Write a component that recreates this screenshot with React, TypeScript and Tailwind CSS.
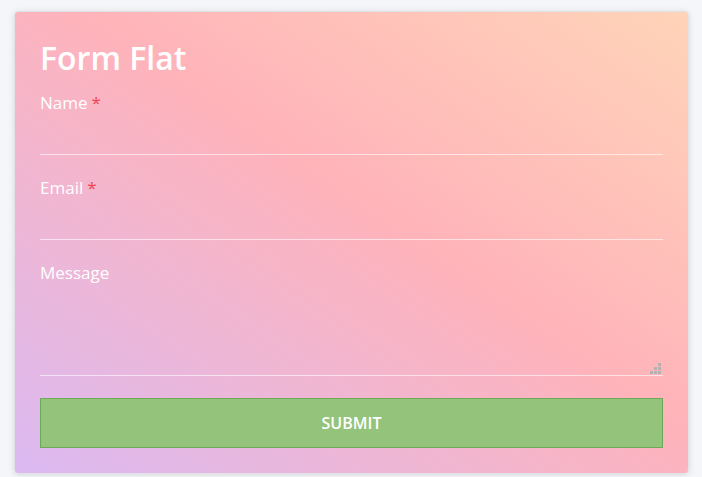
import { useState } from "react";

const font = { fontFamily: "'Open Sans', 'Noto Sans', sans-serif" };

const Field = ({ label, required, children }: { label: string; required?: boolean; children: React.ReactNode }) => (
  <div className="flex flex-col">
    <label className="text-[17px] leading-[24px] text-white">
      {label}
      {required && <span className="text-[#f0444f] ml-1">*</span>}
    </label>
    {children}
  </div>
);

// little stepped grip, like the one in the corner of the message box
const Grip = () => (
  <div className="absolute right-[2px] bottom-[2px] grid grid-cols-3 gap-[1px] pointer-events-none">
    {[0, 0, 1, 0, 1, 1, 1, 1, 1].map((on, i) => (
      <span key={i} className={`w-[3px] h-[3px] ${on ? "bg-[#b5b0b0]" : ""}`} />
    ))}
  </div>
);

const App = () => {
  const [name, setName] = useState("");
  const [email, setEmail] = useState("");
  const [message, setMessage] = useState("");

  return (
    <div className="min-h-screen bg-[#f4f6fa] pt-[11px] pl-[14px]" style={font}>
      <form
        onSubmit={(e) => e.preventDefault()}
        className="w-[675px] rounded-[4px] border border-[#e2e2e6] bg-gradient-to-tr from-[#dcb9f0] from-[2%] via-[#ffb3ba] via-[55%] to-[#ffd4b8] px-[25px] pt-[27px] pb-[25px] shadow-[0_1px_6px_rgba(0,0,0,0.12)]"
      >
        <h1 className="text-[32px] leading-[38px] font-semibold text-white">Form Flat</h1>
        <div className="mt-[14px] flex flex-col gap-[21px]">
          <Field label="Name" required>
            <input
              value={name}
              onChange={(e) => setName(e.target.value)}
              className="h-[40px] bg-transparent border-b border-white/60 outline-none text-white text-[17px]"
            />
          </Field>
          <Field label="Email" required>
            <input
              type="email"
              value={email}
              onChange={(e) => setEmail(e.target.value)}
              className="h-[40px] bg-transparent border-b border-white/60 outline-none text-white text-[17px]"
            />
          </Field>
          <Field label="Message">
            <div className="relative">
              <textarea
                value={message}
                onChange={(e) => setMessage(e.target.value)}
                className="block w-full h-[91px] resize-none bg-transparent border-b border-white/60 outline-none text-white text-[17px]"
              />
              <Grip />
            </div>
          </Field>
        </div>
        <button
          type="submit"
          className="mt-[22px] w-full h-[50px] bg-[#94c47c] border border-[#6daa58] text-white text-[16px] font-semibold uppercase"
        >
          Submit
        </button>
      </form>
    </div>
  );
};

export default App;
